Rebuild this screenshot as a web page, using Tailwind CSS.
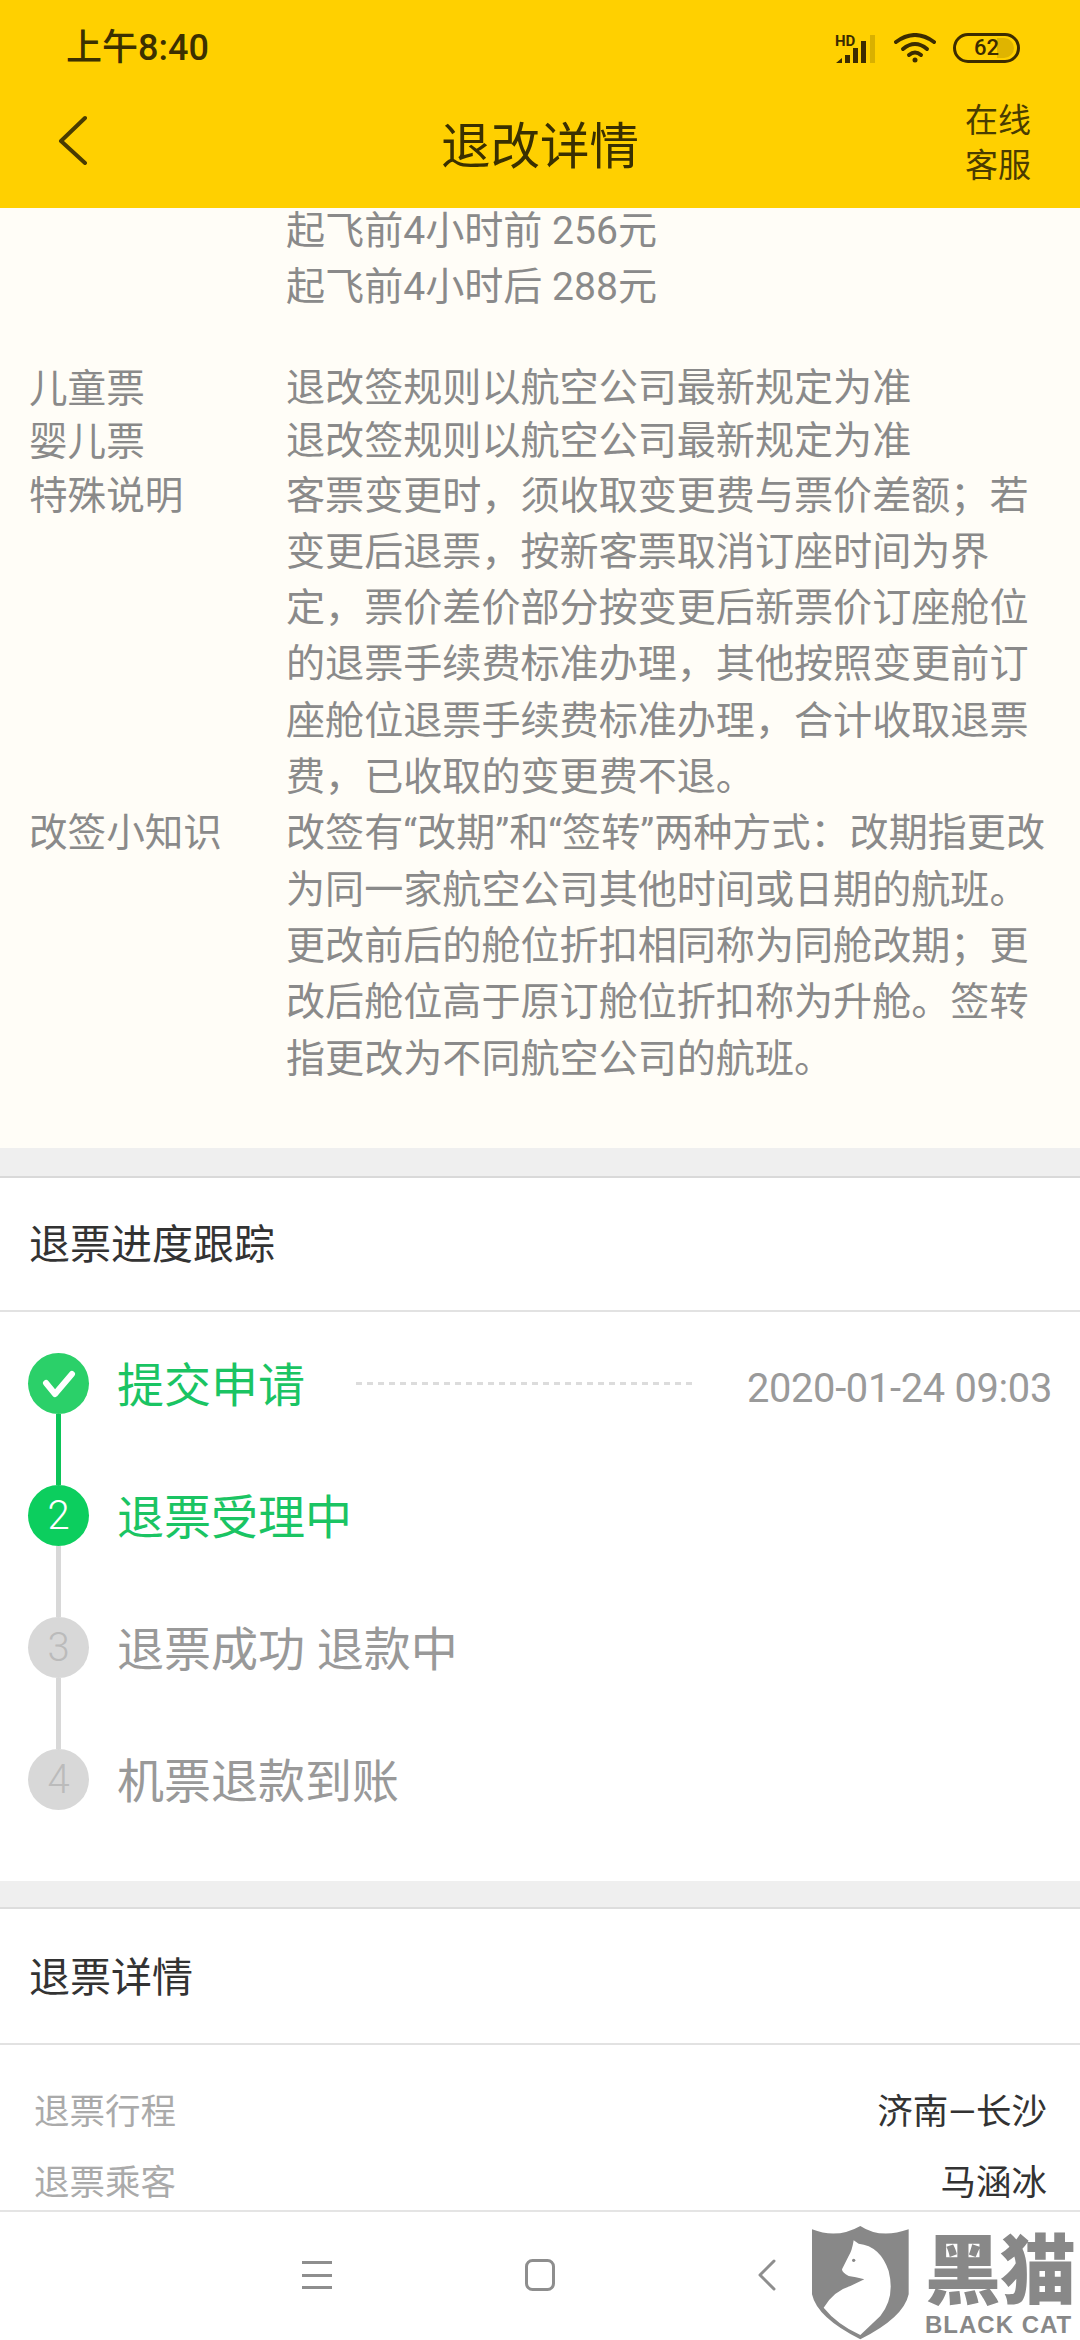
<!DOCTYPE html>
<html lang="zh-CN">
<head>
<meta charset="utf-8">
<script src="https://cdn.jsdelivr.net/npm/@tailwindcss/browser@4"></script>
</head>
<body class="m-0">
<div class="relative w-[1080px] h-[2340px] overflow-hidden flex flex-col bg-white font-['Roboto','Noto_Sans_CJK_SC',sans-serif]">
  <!-- Header -->
  <header class="relative z-10 h-[208px] shrink-0 bg-[#ffd000] flex flex-col">
    <div class="h-[96px] flex items-center justify-between pl-[66px] pr-[60px]">
      <span class="text-[36px] font-medium text-[#3c3000]">上午8:40</span>
      <div class="flex items-center gap-[17px]">
        <svg width="42" height="38" viewBox="0 0 42 38" fill="#3c2c00">
          <text x="0" y="17" font-size="15" font-weight="700" font-family="Roboto">HD</text>
          <path d="M1 34 L7 29 V34 Z M10 26 H15 V34 H10 Z M18 19 H23 V34 H18 Z M26 12 H31 V34 H26 Z"/>
          <rect x="35" y="6" width="5" height="28" fill="#d9b000"/>
        </svg>
        <svg width="42" height="30" viewBox="0 0 42 30" fill="none" stroke="#3c2c00" stroke-width="4" stroke-linecap="round">
          <path d="M2 9 Q21 -5 40 9"/>
          <path d="M9 16 Q21 6 33 16"/>
          <path d="M15 22 Q21 17 27 22" />
          <circle cx="21" cy="27" r="2.5" fill="#3c2c00" stroke="none"/>
        </svg>
        <div class="relative w-[67px] h-[30px] rounded-full border-[3px] border-[#3c2c00] overflow-hidden flex items-center justify-center">
          <div class="absolute right-[3px] top-[2px] bottom-[2px] w-[17px] rounded-r-full bg-[#dfb400]"></div>
          <span class="relative text-[22px] leading-none font-medium text-[#3c2c00]">62</span>
        </div>
      </div>
    </div>
    <div class="relative flex-1 flex items-center justify-center">
      <svg class="absolute left-[58px] top-[19px]" width="30" height="50" viewBox="0 0 30 50" fill="none" stroke="#4a3c00" stroke-width="4" stroke-linecap="round" stroke-linejoin="round"><path d="M27 3 L3 26 L27 48"/></svg>
      <h1 class="text-[49.5px] font-normal text-[#3a3000] -mt-[22px] pt-[12px]">退改详情</h1>
      <div class="absolute left-[965px] top-[2px] text-[33px] leading-[45px] text-[#4a3c00]">在线<br>客服</div>
    </div>
  </header>

  <!-- Rules -->
  <section class="h-[940px] shrink-0 bg-[#fffdf7] text-[#8a8a8a] text-[39.1px] leading-[56.3px] overflow-hidden">
    <div class="-mt-[5px]">
      <div class="pl-[286px]">起飞前4小时前 256元<br>起飞前4小时后 288元</div>
      <div class="mt-[46px] flex pl-[29px] leading-[53px]"><div class="w-[257px] text-[38.6px]">儿童票</div><div>退改签规则以航空公司最新规定为准</div></div>
      <div class="flex pl-[29px] leading-[53px]"><div class="w-[257px] text-[38.6px]">婴儿票</div><div>退改签规则以航空公司最新规定为准</div></div>
      <div class="flex pl-[29px]"><div class="w-[257px] shrink-0 text-[38.6px]">特殊说明</div><div>客票变更时，须收取变更费与票价差额；若<br>变更后退票，按新客票取消订座时间为界<br>定，票价差价部分按变更后新票价订座舱位<br>的退票手续费标准办理，其他按照变更前订<br>座舱位退票手续费标准办理，合计收取退票<br>费，已收取的变更费不退。</div></div>
      <div class="flex pl-[29px]"><div class="w-[257px] shrink-0 text-[38.6px]">改签小知识</div><div class="whitespace-nowrap">改签有“改期”和“签转”两种方式：改期指更改<br>为同一家航空公司其他时间或日期的航班。<br>更改前后的舱位折扣相同称为同舱改期；更<br>改后舱位高于原订舱位折扣称为升舱。签转<br>指更改为不同航空公司的航班。</div></div>
    </div>
  </section>

  <div class="h-[30px] shrink-0 bg-[#efefef] border-b-2 border-[#d9d9d9]"></div>

  <!-- Progress -->
  <div class="h-[134px] shrink-0 flex items-center pl-[29px] pt-[3px] border-b-2 border-[#e2e2e2] text-[41px] text-[#333]">退票进度跟踪</div>
  <section class="h-[569px] shrink-0 pt-[41px] pl-[28px] pr-[28px]">
    <div class="flex items-start">
      <div class="w-[61px] flex flex-col items-center">
        <div class="w-[61px] h-[61px] rounded-full bg-[#2bd069] flex items-center justify-center">
          <svg width="36" height="30" viewBox="0 0 36 30" fill="none" stroke="#fff" stroke-width="6" stroke-linecap="round" stroke-linejoin="round"><path d="M5 14 L14 25 L31 5"/></svg>
        </div>
        <div class="w-[5px] h-[71px] bg-[#0cc458]"></div>
      </div>
      <div class="ml-[28px] h-[61px] pt-[6px] flex items-center text-[47px] text-[#1ac463] w-[239px]">提交申请</div>
      <div class="h-[61px] flex items-center"><div class="w-[336px] h-[3px] bg-[repeating-linear-gradient(90deg,#dcdcdc_0,#dcdcdc_6px,transparent_6px,transparent_11px)]"></div></div>
      <div class="ml-auto h-[61px] pt-[10px] flex items-center text-[39.8px] text-[#9a9a9a] tracking-[-0.3px]">2020-01-24 09:03</div>
    </div>
    <div class="flex items-start">
      <div class="w-[61px] flex flex-col items-center">
        <div class="w-[61px] h-[61px] rounded-full bg-[#0cce5e] flex items-center justify-center text-[40px] font-light text-white">2</div>
        <div class="w-[5px] h-[71px] bg-[#d8d8d8]"></div>
      </div>
      <div class="ml-[28px] h-[61px] pt-[6px] flex items-center text-[47px] text-[#1ac463]">退票受理中</div>
    </div>
    <div class="flex items-start">
      <div class="w-[61px] flex flex-col items-center">
        <div class="w-[61px] h-[61px] rounded-full bg-[#d8d8d8] flex items-center justify-center text-[40px] font-light text-[#bbb]">3</div>
        <div class="w-[5px] h-[71px] bg-[#d8d8d8]"></div>
      </div>
      <div class="ml-[28px] h-[61px] pt-[6px] flex items-center text-[47px] text-[#999]">退票成功 退款中</div>
    </div>
    <div class="flex items-start">
      <div class="w-[61px] flex flex-col items-center">
        <div class="w-[61px] h-[61px] rounded-full bg-[#d8d8d8] flex items-center justify-center text-[40px] font-light text-[#bbb]">4</div>
      </div>
      <div class="ml-[28px] h-[61px] pt-[6px] flex items-center text-[47px] text-[#999]">机票退款到账</div>
    </div>
  </section>

  <div class="h-[28px] shrink-0 bg-[#efefef] border-b-2 border-[#dddddd]"></div>

  <!-- Details -->
  <div class="h-[136px] shrink-0 flex items-center pl-[29px] pt-[6px] border-b-2 border-[#e2e2e2] text-[41px] text-[#333]">退票详情</div>
  <section class="h-[165px] shrink-0 pt-[32px] pl-[34px] pr-[33px] text-[35.5px] leading-[71px]">
    <div class="flex justify-between"><span class="text-[#aaa]">退票行程</span><span class="text-[#333]">济南—长沙</span></div>
    <div class="flex justify-between"><span class="text-[#aaa]">退票乘客</span><span class="text-[#333]">马涵冰</span></div>
  </section>

  <!-- Nav -->
  <nav class="flex-1 border-t-2 border-[#e4e4e4] flex items-center pb-[2px]">
    <div class="flex w-full items-center">
      <svg class="ml-[302px]" width="30" height="28" viewBox="0 0 30 28" fill="#8e8e8e"><rect y="0" width="30" height="3"/><rect y="13" width="30" height="3"/><rect y="25" width="30" height="3"/></svg>
      <svg class="ml-[193px]" width="30" height="32" viewBox="0 0 30 32" fill="none" stroke="#8e8e8e" stroke-width="3"><rect x="1.5" y="1.5" width="27" height="29" rx="6"/></svg>
      <svg class="ml-[202px]" width="20" height="32" viewBox="0 0 20 32" fill="none" stroke="#8e8e8e" stroke-width="3" stroke-linecap="round" stroke-linejoin="round"><path d="M17 2 L3 16 L17 30"/></svg>
    </div>
  </nav>

  <!-- Watermark -->
  <div class="absolute left-[812px] top-[2225px] w-[268px] h-[115px] flex">
    <svg width="98" height="115" viewBox="95 72 294 345" class="shrink-0">
      <path fill="#888" d="M95 85 Q170 115 240 75 Q300 115 385 85 L385 280 Q370 350 240 415 Q110 350 95 280 Z"/>
      <path fill="#fff" d="M220 118 L235 128 Q300 135 325 210 Q345 290 300 345 L240 402 Q170 370 130 320 Q160 270 210 255 L252 235 Q225 228 205 225 Q185 215 185 205 L205 165 Q215 150 220 118 Z"/>
      <circle cx="220" cy="178" r="5" fill="#888"/>
    </svg>
    <div class="ml-[15px] flex flex-col text-[#888] whitespace-nowrap">
      <div class="text-[76px] leading-[80px] font-black h-[88px] font-['Noto_Sans_CJK_SC'] -tracking-[1px]">黑猫</div>
      <div class="text-[24px] leading-[24px] font-bold font-['Liberation_Sans'] tracking-[1px]">BLACK CAT</div>
    </div>
  </div>
</div>
</body>
</html>
